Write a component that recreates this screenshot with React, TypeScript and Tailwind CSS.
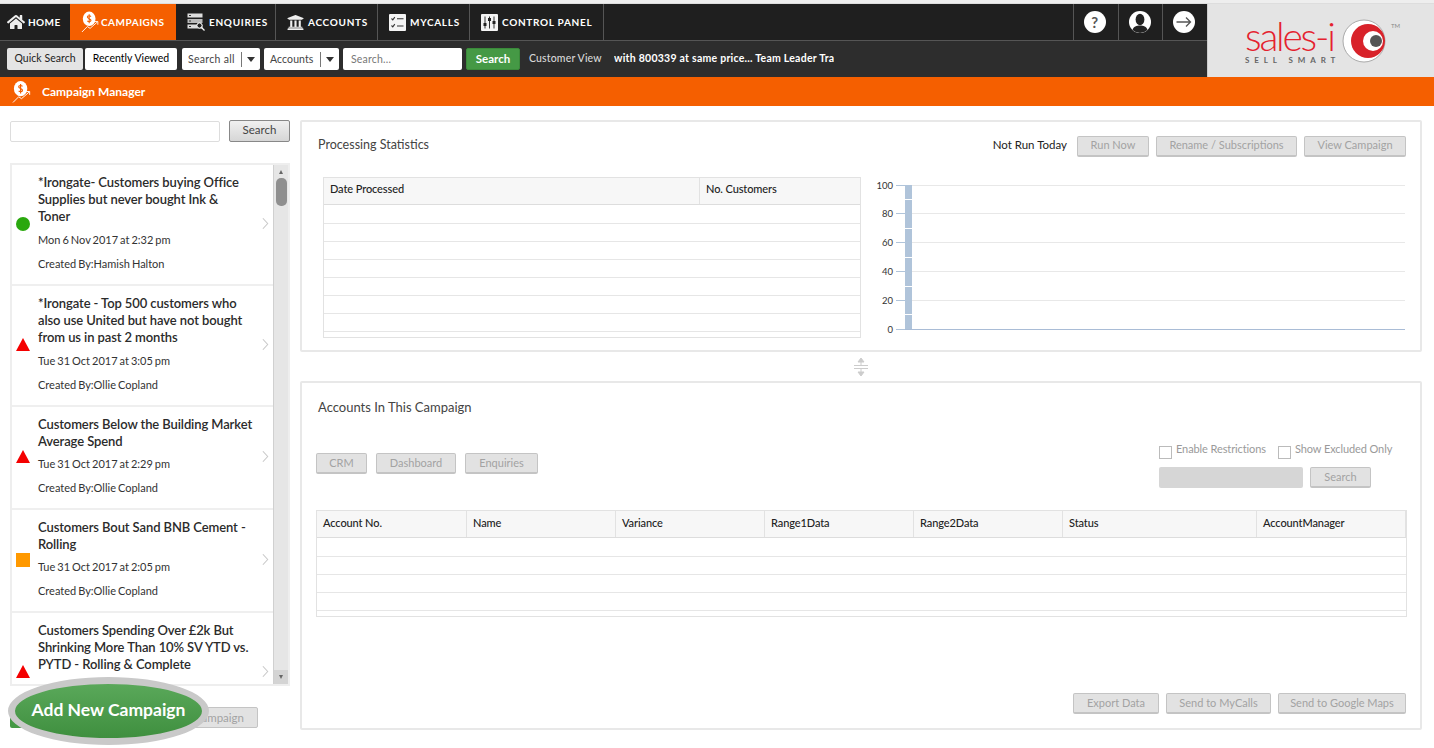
import { FaHome, FaUniversity } from "react-icons/fa";

const campaigns = [
  { title: ["*Irongate- Customers buying Office", "Supplies but never bought Ink &", "Toner"], date: "Mon 6 Nov 2017 at 2:32 pm", by: "Created By:Hamish Halton", status: "green" },
  { title: ["*Irongate - Top 500 customers who", "also use United but have not bought", "from us in past 2 months"], date: "Tue 31 Oct 2017 at 3:05 pm", by: "Created By:Ollie Copland", status: "red" },
  { title: ["Customers Below the Building Market", "Average Spend"], date: "Tue 31 Oct 2017 at 2:29 pm", by: "Created By:Ollie Copland", status: "red" },
  { title: ["Customers Bout Sand BNB Cement -", "Rolling"], date: "Tue 31 Oct 2017 at 2:05 pm", by: "Created By:Ollie Copland", status: "orange" },
  { title: ["Customers Spending Over £2k But", "Shrinking More Than 10% SV YTD vs.", "PYTD - Rolling & Complete"], date: "", by: "", status: "red" },
];

function BalloonIcon({ className }: { className: string }) {
  return (
    <svg viewBox="0 0 22 24" className={className}>
      <ellipse cx="9" cy="8.5" rx="7" ry="8" fill="#fff" />
      <path d="M9 3.5v10M11 6c-1-1.2-4-1.2-4 .6s4 1.600 4 3.600-3 1.800-4 .6" fill="none" stroke="#f55f00" strokeWidth="1.200" />
      <path d="M1 23l6-6 3 2 8-7M15 11.500h3.500V15" fill="none" stroke="#fff" strokeWidth="1" />
    </svg>
  );
}

function EnquiriesIcon() {
  return (
    <svg viewBox="0 0 18 18" className="w-[18px] h-[18px]">
      <rect x="0.5" y="0.5" width="15" height="4" fill="#ddd" />
      <rect x="0.5" y="6" width="15" height="4" fill="#bbb" />
      <rect x="0.5" y="11.500" width="15" height="4" fill="#ddd" />
      <path d="M2 2.500h2M2 8h2M2 13.500h2" stroke="#333" />
      <circle cx="12.500" cy="12.500" r="2.600" fill="#222" stroke="#fff" />
      <path d="M14.500 14.500l3 3" stroke="#fff" strokeWidth="1.300" />
    </svg>
  );
}

function MyCallsIcon() {
  return (
    <svg viewBox="0 0 17 17" className="w-[17px] h-[17px]">
      <rect width="17" height="17" rx="1" fill="#f4f4f4" />
      <path d="M2.500 4.500l1.300 1.300 2-2.600M2.500 11.500l1.300 1.300 2-2.600M8 4.800h6.500M8 12h6.500" fill="none" stroke="#333" strokeWidth="1.100" />
    </svg>
  );
}

function ControlPanelIcon() {
  return (
    <svg viewBox="0 0 17 17" className="w-[17px] h-[17px]">
      <rect width="17" height="17" rx="1" fill="#f4f4f4" />
      <path d="M4 2.500v12M8.500 2.500v12M13 2.500v12" stroke="#333" strokeWidth="1" />
      <rect x="2.500" y="9" width="3" height="3" fill="#222" />
      <rect x="7" y="4" width="3" height="3" fill="#222" />
      <rect x="11.500" y="7" width="3" height="3" fill="#222" />
    </svg>
  );
}

function HelpIcon() {
  return (
    <div className="w-[22px] h-[22px] rounded-full bg-white flex items-center justify-center text-[#555] text-[15px] leading-none">?</div>
  );
}

function UserIcon() {
  return (
    <svg viewBox="0 0 22 22" className="w-[22px] h-[22px]">
      <circle cx="11" cy="11" r="11" fill="#fff" />
      <ellipse cx="11" cy="8.500" rx="4.400" ry="5.800" fill="#222" />
      <path d="M3.500 19c1-3.500 4-4.500 7.500-4.500s6.500 1 7.500 4.500a11 11 0 0 1-15 0z" fill="#222" />
    </svg>
  );
}

function LogoutIcon() {
  return (
    <svg viewBox="0 0 22 22" className="w-[22px] h-[22px]">
      <circle cx="11" cy="11" r="11" fill="#fff" />
      <path d="M3.500 11h14M13 6.500l4.500 4.500-4.500 4.500" fill="none" stroke="#555" strokeWidth="1.300" />
    </svg>
  );
}

function Chevron() {
  return (
    <svg viewBox="0 0 8 14" className="w-[7px] h-[13px] shrink-0 -mt-[2px]">
      <path d="M1 1l5.500 6L1 13" fill="none" stroke="#c8c8c8" strokeWidth="1.200" />
    </svg>
  );
}

function StatusIcon({ status }: { status: string }) {
  if (status === "green") return <div className="w-[14px] h-[14px] rounded-full bg-[#2aa80e]" />;
  if (status === "orange") return <div className="w-[14px] h-[14px] bg-[#ff9900]" />;
  return (
    <svg viewBox="0 0 14 13" className="w-[14px] h-[13px]">
      <path d="M7 0l7 13H0z" fill="#f40000" />
    </svg>
  );
}

function Btn({ w, children }: { w: string; children: string }) {
  return (
    <div className={`${w} h-[21px] shrink-0 flex items-center justify-center rounded-[2px] border border-[#c4c4c4] border-b-2 bg-[#e2e2e2] text-[11px] text-[#a3a3a3]`}>
      {children}
    </div>
  );
}

function Rows({ n }: { n: number }) {
  return (
    <div className="pt-[1px]">
      {Array.from({ length: n }).map((_, i) => (
        <div key={i} className="h-[18px] border-b border-[#e6e6e6]" />
      ))}
    </div>
  );
}

function Chart() {
  const labels = [
    { l: 100, y: 8.5 },
    { l: 80, y: 36.5 },
    { l: 60, y: 65.5 },
    { l: 40, y: 94.5 },
    { l: 20, y: 123.5 },
    { l: 0, y: 152.5 },
  ];
  return (
    <svg viewBox="0 0 540 165" className="w-[540px] h-[165px] ml-[9px]">
      {labels.map(({ l, y }) => (
        <g key={l}>
          <text x="23" y={y + 3.5} textAnchor="end" fontSize="9.500" fill="#333" fontFamily="Lato, sans-serif">{l}</text>
          <path d={`M26 ${y}H35`} stroke="#b0c4da" />
          {l > 0 && <path d={`M35 ${y}H535`} stroke="#e8e8e8" />}
        </g>
      ))}
      <rect x="35" y="8" width="7" height="144" fill="#b0c4da" />
      {[22.5, 51.5, 80.5, 109.5, 137.5].map((y) => (
        <path key={y} d={`M35 ${y}H42`} stroke="#fff" />
      ))}
      <path d="M35 152.500H535" stroke="#a9bcd6" />
    </svg>
  );
}

function Logo() {
  return (
    <div className="w-[227px] h-[73px] shrink-0 bg-[#e4e4e4] flex items-start border-l border-[#ccc]">
      <div className="ml-[37px] mt-[13px] w-[98px]">
        <div className="text-[39px] leading-[39px] font-light text-[#e4222f] tracking-[-2.200px] whitespace-nowrap">sales-i</div>
        <div className="text-[8px] leading-[8px] font-bold text-[#666] tracking-[4.900px] whitespace-nowrap">SELL SMART</div>
      </div>
      <svg viewBox="0 0 44 44" className="w-[44px] h-[44px] mt-[15px] -ml-[1px]">
        <circle cx="22" cy="22" r="21" fill="#fff" stroke="#aaa" />
        <circle cx="26" cy="22" r="17" fill="#d8222a" />
        <circle cx="31" cy="22" r="10" fill="#fff" />
        <circle cx="34" cy="22" r="6" fill="#555" />
      </svg>
      <span className="text-[6px] leading-[8px] text-[#888] mt-[18px] ml-[5px]">TM</span>
    </div>
  );
}

const navItems = [
  { label: "ENQUIRIES", w: "w-[100px]", icon: <EnquiriesIcon /> },
  { label: "ACCOUNTS", w: "w-[102px]", icon: <FaUniversity className="w-[17px] h-[17px] text-[#eee]" /> },
  { label: "MYCALLS", w: "w-[92px]", icon: <MyCallsIcon /> },
  { label: "CONTROL PANEL", w: "w-[134px]", icon: <ControlPanelIcon /> },
];

const accountCols = [
  { label: "Account No.", w: "w-[150px]" },
  { label: "Name", w: "w-[149px]" },
  { label: "Variance", w: "w-[149px]" },
  { label: "Range1Data", w: "w-[149px]" },
  { label: "Range2Data", w: "w-[149px]" },
  { label: "Status", w: "w-[194px]" },
  { label: "AccountManager", w: "flex-1" },
];

export default function App() {
  return (
    <div className="relative w-[1434px] h-[748px] overflow-hidden bg-white [font-family:Lato,sans-serif] text-[#333]">
      <div className="h-[4px] bg-[#eeeeee] border-b border-[#ddd]" />

      {/* top bars */}
      <div className="flex">
        <div className="flex-1">
          <div className="flex h-[37px] bg-[#1f1f1f] border-b border-[#555] text-[10px] font-bold tracking-[0.700px] text-white">
            <div className="w-[70px] flex items-center gap-[3px] pl-[7px] tracking-[0.400px]">
              <FaHome className="w-[18px] h-[18px] text-[#eee]" />
              <span>HOME</span>
            </div>
            <div className="w-[106px] flex items-center pl-[11px] bg-[#f55f00] tracking-[0.500px]">
              <BalloonIcon className="w-[20px] h-[24px] shrink-0" />
              <span>CAMPAIGNS</span>
            </div>
            {navItems.map((n) => (
              <div key={n.label} className={`${n.w} flex items-center gap-[4px] pl-[11px] border-r border-[#555] whitespace-nowrap`}>
                {n.icon}
                <span>{n.label}</span>
              </div>
            ))}
            <div className="flex-1" />
            <div className="w-[45px] flex items-center justify-center pr-[2px] border-l border-[#555]"><HelpIcon /></div>
            <div className="w-[44px] flex items-center justify-center pr-[2px] border-l border-[#555]"><UserIcon /></div>
            <div className="w-[45px] flex items-center justify-center pr-[2px] border-l border-[#555]"><LogoutIcon /></div>
          </div>
          <div className="flex items-start h-[36px] bg-[#2d2d2d] pt-[7px] pl-[7px] text-[10.500px] text-[#222]">
            <div className="w-[76px] h-[22px] flex items-center justify-center rounded-[2px] bg-[#e4e4e4] tracking-[0.050px]">Quick Search</div>
            <div className="w-[92px] h-[22px] ml-[2px] flex items-center justify-center rounded-[2px] bg-white text-black">Recently Viewed</div>
            <div className="w-[78px] h-[22px] ml-[5px] pt-[1px] flex items-center rounded-[2px] bg-white pl-[6px] text-[#444] tracking-[0.300px]">
              <span className="w-[53px]">Search all</span>
              <span className="h-[15px] border-l border-[#777]" />
              <span className="ml-[5px] w-0 h-0 border-x-[4px] border-x-transparent border-t-[5px] border-t-[#333]" />
            </div>
            <div className="w-[75px] h-[22px] ml-[4px] pt-[1px] flex items-center rounded-[2px] bg-white pl-[6px] text-[#444] tracking-[0.100px]">
              <span className="w-[50px]">Accounts</span>
              <span className="h-[15px] border-l border-[#777]" />
              <span className="ml-[5px] w-0 h-0 border-x-[4px] border-x-transparent border-t-[5px] border-t-[#333]" />
            </div>
            <div className="w-[119px] h-[22px] ml-[4px] pt-[1px] flex items-center rounded-[2px] bg-white pl-[8px] text-[#777] tracking-[0.200px]">Search...</div>
            <div className="w-[54px] h-[22px] ml-[4px] flex items-center justify-center rounded-[2px] bg-[#459945] border border-[#3a8a3a] text-[11.500px] font-bold text-white">Search</div>
            <div className="h-[22px] ml-[9px] w-[85px] flex items-center text-[#d8d8d8] font-medium whitespace-nowrap tracking-[0.150px]">Customer View</div>
            <div className="h-[22px] w-[220px] overflow-hidden flex items-center text-white font-bold whitespace-nowrap tracking-[0.250px]">with 800339 at same price... Team Leader Tra</div>
          </div>
        </div>
        <Logo />
      </div>

      <div className="h-[29px] bg-[#f55f00] flex items-center pl-[12px] gap-[9px] text-[12px] font-bold text-white">
        <BalloonIcon className="w-[21px] h-[24px]" />
        <span>Campaign Manager</span>
      </div>

      <div className="flex pt-[14px]">
        {/* campaign list */}
        <div className="ml-[10px] w-[280px]">
          <div className="flex items-center justify-between h-[22px]">
            <div className="w-[210px] h-[21px] rounded-[2px] border border-[#ddd] bg-white" />
            <div className="w-[61px] h-[22px] pb-[3px] flex items-center justify-center rounded-[2px] border border-[#888] bg-gradient-to-b from-[#f0f0f0] to-[#d6d6d6] text-[11.500px] text-[#444]">Search</div>
          </div>
          <div className="mt-[21px] h-[523px] flex border-2 border-[#eeeeee] overflow-hidden">
            <div className="flex-1 min-w-0">
              {campaigns.map((c) => (
                <div key={c.title[0]} className="flex items-center border-b-2 border-[#efefef] pr-[4px] pl-[4px]">
                  <div className="w-[22px] shrink-0 pb-[2px]"><StatusIcon status={c.status} /></div>
                  <div className="flex-1 pt-[9px] pb-[12px]">
                    <div className="text-[13px] leading-[17px] font-semibold tracking-[-0.100px] text-[#2b2b2b] whitespace-nowrap">
                      {c.title.map((t) => <div key={t}>{t}</div>)}
                    </div>
                    <div className={`${c.title.length === 2 ? "mt-[5px]" : "mt-[6px]"} h-[17px] text-[11px] leading-[17px] [word-spacing:-0.800px]`}>{c.date}</div>
                    <div className="mt-[7px] h-[17px] text-[11px] leading-[17px] [word-spacing:-0.800px]">{c.by}</div>
                  </div>
                  <Chevron />
                </div>
              ))}
            </div>
            <div className="w-[15px] shrink-0 bg-[#e6e6e6] border-l border-[#d0d0d0] flex flex-col items-center">
              <span className="mt-[5px] w-0 h-0 border-x-[2.500px] border-x-transparent border-b-[4px] border-b-[#666]" />
              <div className="mt-[4px] w-[11px] h-[28px] rounded-[5px] bg-[#8f8f8f]" />
              <div className="flex-1" />
              <div className="w-full h-[14px] bg-[#d4d4d4] flex items-center justify-center">
                <span className="w-0 h-0 border-x-[2.500px] border-x-transparent border-t-[4px] border-t-[#666]" />
              </div>
            </div>
          </div>
          <div className="mt-[21px] flex">
            <div className="w-[120px] h-[21px] rounded-[2px] bg-[#459945]" />
            <div className="ml-[18px] w-[110px] h-[21px] flex items-center justify-end pr-[13px] rounded-[2px] border border-[#c4c4c4] bg-[#e2e2e2] text-[11.500px] text-[#a3a3a3] whitespace-nowrap">ampaign</div>
          </div>
        </div>

        {/* right side */}
        <div className="ml-[10px] w-[1122px]">
          <div className="h-[232px] border-2 border-[#e8e8e8] rounded-[2px]">
            <div className="flex items-center h-[35px] pt-[14px] pl-[16px] pr-[14px]">
              <span className="mb-[4px] leading-[16px] text-[12.500px] text-[#444]">Processing Statistics</span>
              <span className="ml-auto mb-[3px] leading-[16px] text-[11.500px] text-[#222]">Not Run Today</span>
              <div className="ml-[10px]"><Btn w="w-[72px] pb-[1px]">Run Now</Btn></div>
              <div className="ml-[7px]"><Btn w="w-[141px] pb-[1px]">Rename / Subscriptions</Btn></div>
              <div className="ml-[7px]"><Btn w="w-[102px] pb-[1px]">View Campaign</Btn></div>
            </div>
            <div className="flex mt-[20px] pl-[21px]">
              <div className="w-[538px] h-[161px] border border-[#e2e2e2] overflow-hidden">
                <div className="flex h-[27px] bg-[#f7f7f7] border-b border-[#ddd] text-[11px] tracking-[-0.100px] text-[#222] font-medium">
                  <div className="w-[376px] flex items-center pb-[3px] pl-[6px] border-r border-[#e2e2e2]">Date Processed</div>
                  <div className="flex-1 flex items-center pb-[3px] pl-[6px]">No. Customers</div>
                </div>
                <Rows n={8} />
              </div>
              <Chart />
            </div>
          </div>

          <div className="h-[29px] flex items-center justify-center">
            <svg viewBox="0 0 16 18" className="w-[16px] h-[18px]">
              <path d="M8 0l3 4H5zM8 18l-3-4h6zM8 4v3M8 11v3M1 7.500h14M1 10.500h14" fill="#ccc" stroke="#ccc" strokeWidth="1" />
            </svg>
          </div>

          <div className="h-[349px] border-2 border-[#e8e8e8] rounded-[2px] flex flex-col pl-[14px] pr-[13px] pb-[14px]">
            <div className="pt-[15px] pl-[2px] text-[13px] leading-[18px] text-[#444]">Accounts In This Campaign</div>
            <div className="mt-[29px] flex items-start h-[43px] pr-[1px]">
              <div className="mt-[8px] flex gap-[9px]">
                <Btn w="w-[51px]">CRM</Btn>
                <Btn w="w-[80px]">Dashboard</Btn>
                <Btn w="w-[73px]">Enquiries</Btn>
              </div>
              <div className="ml-auto w-[247px]">
                <div className="flex items-start h-[16px] text-[11px] leading-[13px] tracking-[-0.100px] text-[#9a9a9a] whitespace-nowrap">
                  <span className="mt-[1px] w-[13px] h-[13px] border border-[#bbb]" />
                  <span className="ml-[4px] -mt-[3px] w-[102px]">Enable Restrictions</span>
                  <span className="mt-[1px] w-[13px] h-[13px] border border-[#bbb]" />
                  <span className="ml-[4px] -mt-[3px]">Show Excluded Only</span>
                </div>
                <div className="mt-[6px] flex gap-[7px]">
                  <div className="w-[144px] h-[21px] rounded-[2px] bg-[#d6d6d6]" />
                  <Btn w="w-[61px]">Search</Btn>
                </div>
              </div>
            </div>
            <div className="mt-[22px] h-[107px] border border-[#e2e2e2] overflow-hidden">
              <div className="flex h-[27px] bg-[#f7f7f7] border-b border-[#ddd] text-[11px] tracking-[-0.100px] text-[#222] font-medium">
                {accountCols.map((c) => (
                  <div key={c.label} className={`${c.w} flex items-center pb-[1px] pl-[6px] border-r border-[#e2e2e2]`}>{c.label}</div>
                ))}
              </div>
              <Rows n={5} />
            </div>
            <div className="mt-auto flex justify-end gap-[7px] pr-[1px]">
              <Btn w="w-[86px]">Export Data</Btn>
              <Btn w="w-[105px]">Send to MyCalls</Btn>
              <Btn w="w-[128px]">Send to Google Maps</Btn>
            </div>
          </div>
        </div>
      </div>

      {/* callout over the add button */}
      <div className="absolute left-[8px] top-[677px] w-[201px] h-[68px] pb-[2px] rounded-[50%] border-[7px] border-[#c9c9c9] bg-gradient-to-b from-[#5aa85a] to-[#3f8f3f] flex items-center justify-center text-[17.500px] font-bold text-white whitespace-nowrap">
        Add New Campaign
      </div>
    </div>
  );
}
